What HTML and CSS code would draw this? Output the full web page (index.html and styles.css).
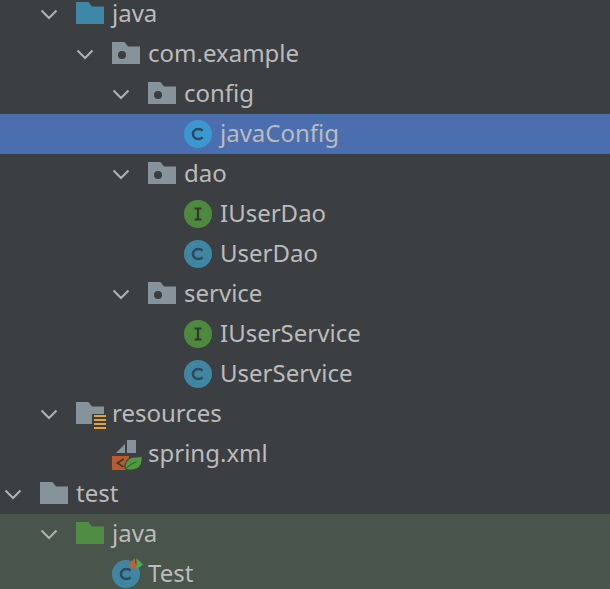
FILE: index.html
```html
<!DOCTYPE html>
<html lang="en">
<head>
<meta charset="utf-8">
<title>Project tree</title>
<link rel="stylesheet" href="styles.css">
</head>
<body>
<svg class="defs" width="0" height="0" aria-hidden="true">
  <defs>
    <path id="folder" d="M0 2H12.5L16 6.5H28V24H0Z"/>
    <path id="chev" d="M1.5 1.5L9 9L16.5 1.5"/>
    <g id="cls">
      <circle cx="14" cy="14" r="14"/>
      <path class="c-letter" d="M18.6 10.6C17.4 9.5 16 9 14.4 9C11.2 9 9 11.2 9 14S11.2 19 14.4 19C16 19 17.4 18.5 18.6 17.4"/>
    </g>
    <g id="ifc">
      <circle class="ifc-bg" cx="14" cy="14" r="14"/>
      <path class="i-letter" d="M10.5 8.5H17.5M14 8.5V19.5M10.5 19.5H17.5"/>
    </g>
  </defs>
</svg>
<main class="tree">
  <div class="row d2"><svg class="chev"><use href="#chev"/></svg><svg class="ico f-blue"><use href="#folder"/></svg><span class="name">java</span></div>
  <div class="row d3"><svg class="chev"><use href="#chev"/></svg><svg class="ico f-gray"><use href="#folder"/><circle class="dot" cx="10" cy="15" r="4"/></svg><span class="name">com.example</span></div>
  <div class="row d4"><svg class="chev"><use href="#chev"/></svg><svg class="ico f-gray"><use href="#folder"/><circle class="dot" cx="10" cy="15" r="4"/></svg><span class="name">config</span></div>
  <div class="row leaf d5 selected"><svg class="ico c-bright"><use href="#cls"/></svg><span class="name">javaConfig</span></div>
  <div class="row d4"><svg class="chev"><use href="#chev"/></svg><svg class="ico f-gray"><use href="#folder"/><circle class="dot" cx="10" cy="15" r="4"/></svg><span class="name">dao</span></div>
  <div class="row leaf d5"><svg class="ico"><use href="#ifc"/></svg><span class="name">IUserDao</span></div>
  <div class="row leaf d5"><svg class="ico c-teal"><use href="#cls"/></svg><span class="name">UserDao</span></div>
  <div class="row d4"><svg class="chev"><use href="#chev"/></svg><svg class="ico f-gray"><use href="#folder"/><circle class="dot" cx="10" cy="15" r="4"/></svg><span class="name">service</span></div>
  <div class="row leaf d5"><svg class="ico"><use href="#ifc"/></svg><span class="name">IUserService</span></div>
  <div class="row leaf d5"><svg class="ico c-teal"><use href="#cls"/></svg><span class="name">UserService</span></div>
  <div class="row d2"><svg class="chev"><use href="#chev"/></svg><svg class="ico f-gray"><use href="#folder"/><rect class="cut" x="16" y="14" width="14" height="16"/><path class="res-lines" d="M18 16H30M18 20H30M18 24H30M18 28H30"/></svg><span class="name">resources</span></div>
  <div class="row leaf d3"><svg class="ico"><path class="paper" d="M4 13L13 4V13Z"/><path class="paper" d="M15 0H24V13H15Z"/><rect class="xml" x="0" y="16" width="17" height="14"/><path class="xml-mark" d="M11.5 19L5.5 23L11.5 27"/><path class="leaf-shape" d="M30 15.500C31 24 28 30 20 30H15.500C13 29 12.500 27 13 25C14 20 18 17 22 17C25 17 28 17 30 15.500Z"/><path class="leaf-vein" d="M14.500 28C17.500 25 20 23.500 24.500 21.500"/></svg><span class="name">spring.xml</span></div>
  <div class="row d1"><svg class="chev"><use href="#chev"/></svg><svg class="ico f-gray"><use href="#folder"/></svg><span class="name">test</span></div>
  <div class="row d2 test-src"><svg class="chev"><use href="#chev"/></svg><svg class="ico f-green"><use href="#folder"/></svg><span class="name">java</span></div>
  <div class="row leaf d3 test-src"><svg class="ico c-teal"><use href="#cls"/><path class="run-o" d="M23 -2V9.500L16.500 5Z"/><path class="run-g" d="M24.500 -2L31 4.500L24.500 9.500Z"/></svg><span class="name">Test</span></div>
</main>
</body>
</html>
```
FILE: styles.css
```css
html, body {
  margin: 0;
  height: 100%;
  overflow: hidden;
  background: #3c3f41;
}

.defs {
  display: block;
  height: 0;
}

.tree {
  margin-top: -6px;
  font-family: "Noto Sans", "Open Sans", sans-serif;
  font-size: 24px;
  color: #bbbbbb;
}

.row {
  display: flex;
  align-items: center;
  height: 40px;
}

.d1 { padding-left: 4px; }
.d2 { padding-left: 40px; }
.d3 { padding-left: 76px; }
.d4 { padding-left: 112px; }
.d5 { padding-left: 148px; }
.leaf { margin-left: 36px; }
.leaf.selected { margin-left: 0; padding-left: 184px; }

.selected { background: #4b6eaf; }
.test-src { background: #49544a; }
.leaf.test-src { margin-left: 0; padding-left: 112px; }

.chev {
  width: 18px;
  height: 11px;
  margin-right: 18px;
  flex: none;
  fill: none;
  stroke: #afb1b3;
  stroke-width: 2;
}

.ico {
  width: 28px;
  height: 28px;
  flex: none;
  overflow: visible;
}

.name {
  margin-left: 8px;
  margin-bottom: 2px;
  line-height: 24px;
  white-space: nowrap;
}

.f-blue { fill: #3e87a6; }
.f-gray { fill: #87939a; }
.f-green { fill: #4f8d43; }
.dot { fill: #3c3f41; }
.cut { fill: #3c3f41; }

.res-lines {
  fill: none;
  stroke: #e0a23b;
  stroke-width: 2;
}

.c-teal { fill: #3f86a2; }
.c-bright { fill: #3a97cf; }
.c-letter {
  fill: none;
  stroke: #2f4858;
  stroke-width: 2.6;
}
.ifc-bg { fill: #4e8a3e; }
.i-letter {
  fill: none;
  stroke: #2f3a2c;
  stroke-width: 2.2;
}

.paper { fill: #87939a; }
.xml { fill: #bd5a2b; }
.xml-mark {
  fill: none;
  stroke: #3c3f41;
  stroke-width: 2;
}
.leaf-shape { fill: #4f9a42; stroke: #3c3f41; stroke-width: 1.2; }
.leaf-vein { fill: none; stroke: #2f6b2f; stroke-width: 1.2; }
.run-o { fill: #cf5d2c; }
.run-g { fill: #4fa84a; }
```
